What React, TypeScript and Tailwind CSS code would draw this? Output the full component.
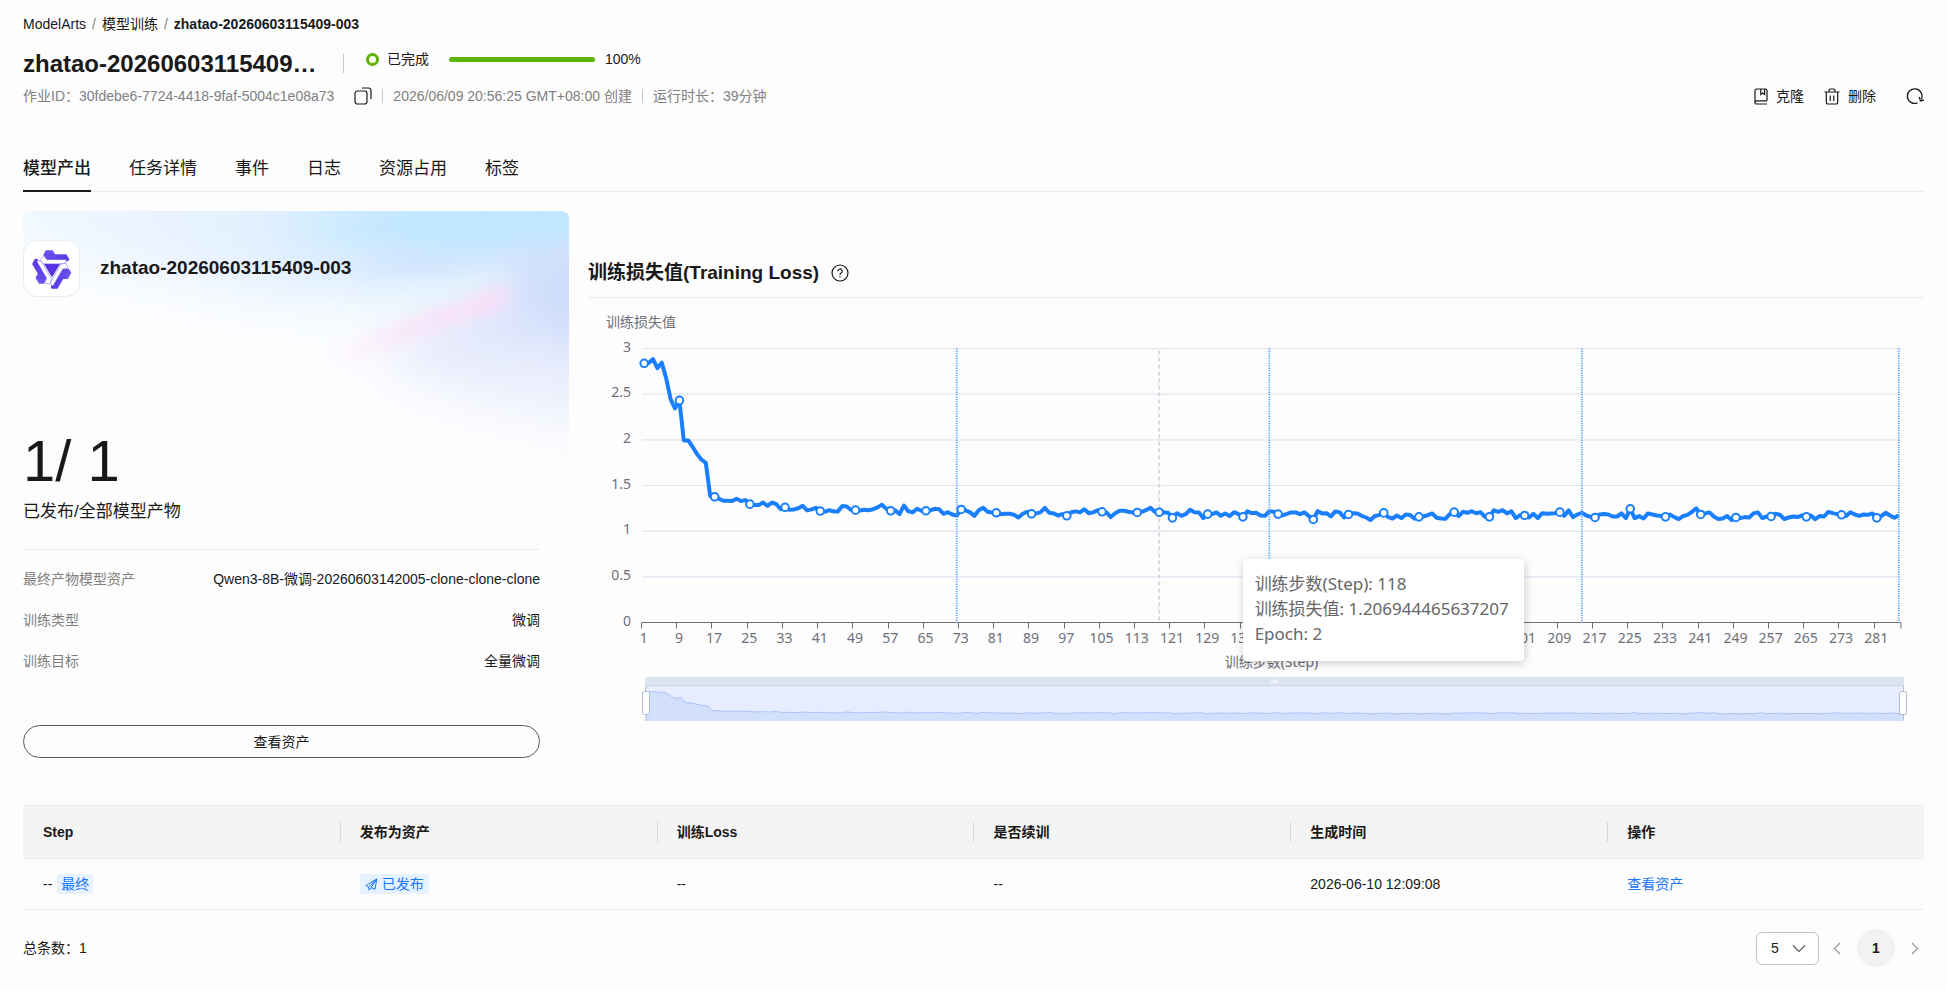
import { useState } from 'react'

// smoothed training loss, one value per step
const LOSS = [
  2.837, 2.84, 2.885, 2.785, 2.845, 2.673, 2.446, 2.344, 2.432, 1.994, 1.994, 1.924, 1.844, 1.785, 1.749, 1.384, 1.376,
  1.354, 1.333, 1.333, 1.329, 1.354, 1.329, 1.34, 1.296, 1.285, 1.285, 1.314, 1.278, 1.314, 1.296, 1.24, 1.26, 1.234,
  1.238, 1.252, 1.278, 1.227, 1.238, 1.256, 1.22, 1.212, 1.23, 1.216, 1.216, 1.274, 1.27, 1.234, 1.23, 1.227, 1.234,
  1.23, 1.241, 1.26, 1.289, 1.245, 1.223, 1.23, 1.187, 1.28, 1.219, 1.205, 1.245, 1.223, 1.223, 1.227, 1.245, 1.241,
  1.19, 1.208, 1.183, 1.172, 1.238, 1.23, 1.205, 1.168, 1.23, 1.256, 1.212, 1.205, 1.201, 1.186, 1.19, 1.19, 1.179,
  1.15, 1.19, 1.212, 1.19, 1.194, 1.205, 1.256, 1.201, 1.194, 1.172, 1.187, 1.168, 1.208, 1.216, 1.205, 1.241, 1.197,
  1.205, 1.23, 1.212, 1.205, 1.154, 1.197, 1.223, 1.223, 1.212, 1.205, 1.205, 1.212, 1.23, 1.256, 1.212, 1.207, 1.205,
  1.201, 1.146, 1.197, 1.168, 1.187, 1.234, 1.208, 1.205, 1.143, 1.187, 1.187, 1.205, 1.168, 1.194, 1.165, 1.208, 1.187,
  1.157, 1.216, 1.197, 1.201, 1.172, 1.168, 1.219, 1.212, 1.187, 1.172, 1.19, 1.205, 1.205, 1.187, 1.205, 1.165, 1.128,
  1.219, 1.194, 1.197, 1.161, 1.216, 1.205, 1.15, 1.183, 1.197, 1.194, 1.168, 1.15, 1.121, 1.165, 1.179, 1.2, 1.154,
  1.139, 1.172, 1.143, 1.183, 1.176, 1.135, 1.157, 1.161, 1.176, 1.194, 1.146, 1.139, 1.135, 1.187, 1.208, 1.165, 1.212,
  1.201, 1.219, 1.197, 1.208, 1.157, 1.157, 1.227, 1.212, 1.23, 1.194, 1.216, 1.143, 1.176, 1.172, 1.15, 1.19, 1.143,
  1.197, 1.19, 1.194, 1.197, 1.208, 1.168, 1.227, 1.154, 1.183, 1.201, 1.172, 1.157, 1.15, 1.183, 1.187, 1.183, 1.161,
  1.161, 1.194, 1.143, 1.245, 1.143, 1.165, 1.139, 1.194, 1.183, 1.172, 1.165, 1.157, 1.183, 1.154, 1.132, 1.165, 1.179,
  1.212, 1.249, 1.183, 1.194, 1.205, 1.161, 1.132, 1.139, 1.165, 1.121, 1.15, 1.143, 1.154, 1.15, 1.194, 1.205, 1.143,
  1.161, 1.161, 1.19, 1.179, 1.132, 1.15, 1.161, 1.154, 1.172, 1.157, 1.172, 1.132, 1.165, 1.161, 1.212, 1.198, 1.187,
  1.179, 1.165, 1.208, 1.183, 1.168, 1.183, 1.179, 1.194, 1.146, 1.165, 1.201, 1.172, 1.146, 1.172,
]

const TABS = ['模型产出', '任务详情', '事件', '日志', '资源占用', '标签']

const DETAILS = [
  { label: '最终产物模型资产', value: 'Qwen3-8B-微调-20260603142005-clone-clone-clone' },
  { label: '训练类型', value: '微调' },
  { label: '训练目标', value: '全量微调' },
]

const COLUMNS = ['Step', '发布为资产', '训练Loss', '是否续训', '生成时间', '操作']

function CopyIcon() {
  return (
    <svg width="18" height="18" viewBox="0 0 18 18" fill="none" stroke="#191919" strokeWidth="1.2">
      <rect x="1" y="4" width="12" height="13" rx="2.5" />
      <path d="M8 1h6.500A2.500 2.500 0 0 1 17 3.500V12" />
    </svg>
  )
}

function CloneIcon() {
  return (
    <svg width="14" height="17" viewBox="0 0 14 17" fill="none" stroke="#191919" strokeWidth="1.2">
      <path d="M13 12.800V2.600A1.600 1.600 0 0 0 11.400 1H2.600A1.600 1.600 0 0 0 1 2.600v11.800A1.600 1.600 0 0 0 2.600 16H13" />
      <path d="M1 14.200a1.600 1.600 0 0 1 1.600-1.400H13" />
      <path d="M6.800 1v5.400l1.900-1.500 1.900 1.500V1" />
    </svg>
  )
}

function TrashIcon() {
  return (
    <svg width="16" height="17" viewBox="0 0 16 17" fill="none" stroke="#191919" strokeWidth="1.2">
      <path d="M.5 4h15M5 4V2.400A1.400 1.400 0 0 1 6.400 1h3.200A1.400 1.400 0 0 1 11 2.400V4" />
      <path d="M2.300 4v10.400A1.600 1.600 0 0 0 3.900 16h8.200a1.600 1.600 0 0 0 1.600-1.600V4" />
      <path d="M6.200 7.500v5.500M9.800 7.500v5.500" />
    </svg>
  )
}

function RefreshIcon() {
  return (
    <svg width="18" height="17" viewBox="0 0 18 17" fill="none" stroke="#191919" strokeWidth="1.3">
      <path d="M11.400 14.900A7.300 7.300 0 1 1 15.300 11.200" />
      <path d="M13.200 9l1.300 3.900 3.300-.9" />
    </svg>
  )
}

function HelpIcon() {
  return (
    <svg width="18" height="18" viewBox="0 0 18 18" fill="none" stroke="#191919" strokeWidth="1.2">
      <circle cx="9" cy="9" r="8" />
      <path d="M6.800 7.200a2.200 2.200 0 1 1 3.300 1.900c-.7.4-1.100.8-1.100 1.600v.3" />
      <path d="M9 12.300v1.300" />
    </svg>
  )
}

function SendIcon() {
  return (
    <svg width="13" height="13" viewBox="0 0 13 13" fill="none" stroke="#1476ff" strokeLinejoin="round">
      <path d="M11.800 1L.9 7.600l2.700 1.600L11.800 1zM11.800 1L10 11.200 6 9.600 11.800 1z" />
      <path d="M3.600 9.200l.6 3L6 9.700" />
    </svg>
  )
}

function QwenLogo() {
  return (
    <svg width="40" height="40" viewBox="-60 -60 120 120">
      <defs>
        <linearGradient id="arm" x1="0" y1="0" x2="1" y2="1">
          <stop offset="0" stopColor="#6a5cf0" />
          <stop offset="1" stopColor="#5a2fe0" />
        </linearGradient>
      </defs>
      <path d="M-24-15h48L0 25z" fill="#5a32e0" />
      {[0, 120, 240].map((deg) => (
        <g key={deg} transform={`rotate(${deg})`} strokeLinejoin="round">
          <path d="M-19-56h21l7 12h34l9 15-4 6h-60l-14-20z" fill="url(#arm)" />
          <path d="M-26-40l9 12h61l-6 12h-64l-10-12z" fill="#fff" stroke="#7a68ee" strokeWidth="1.500" />
        </g>
      ))}
    </svg>
  )
}

function CardBackdrop() {
  return (
    <svg className="absolute inset-0 h-[275px] w-full rounded-t-lg" viewBox="0 0 546 275" preserveAspectRatio="none" aria-hidden="true">
      <defs>
        <filter id="soft" x="-50%" y="-50%" width="200%" height="200%">
          <feGaussianBlur stdDeviation="26" />
        </filter>
        <filter id="streak" x="-50%" y="-50%" width="200%" height="200%">
          <feGaussianBlur stdDeviation="12" />
        </filter>
        <filter id="ray" x="-50%" y="-50%" width="200%" height="200%">
          <feGaussianBlur stdDeviation="8" />
        </filter>
        <linearGradient id="top" x1="0" y1="0" x2="1" y2="0">
          <stop offset="0" stopColor="#f3f9ff" />
          <stop offset="0.4" stopColor="#e4f1ff" />
          <stop offset="0.7" stopColor="#cde6ff" />
          <stop offset="1" stopColor="#c8deff" />
        </linearGradient>
        <linearGradient id="sky" x1="0" y1="0" x2="1" y2="0">
          <stop offset="0" stopColor="#c4ebff" stopOpacity="0" />
          <stop offset="0.45" stopColor="#bfe7ff" />
          <stop offset="1" stopColor="#bdeaff" />
        </linearGradient>
        <linearGradient id="mint" x1="0" y1="1" x2="1" y2="0">
          <stop offset="0" stopColor="#f6fcfd" stopOpacity="0" />
          <stop offset="1" stopColor="#e2f6fb" />
        </linearGradient>
        <linearGradient id="pink" x1="0" y1="0" x2="1" y2="0">
          <stop offset="0" stopColor="#fdf1fb" stopOpacity="0" />
          <stop offset="0.5" stopColor="#fbe2f7" />
          <stop offset="1" stopColor="#f8dcf7" />
        </linearGradient>
        <linearGradient id="fade" x1="0" y1="0" x2="0" y2="1">
          <stop offset="0" stopColor="#fdfdfe" stopOpacity="0" />
          <stop offset="1" stopColor="#fdfdfe" />
        </linearGradient>
      </defs>
      <rect width="546" height="275" fill="#fcfdff" />
      <path d="M-60-60h700V70L420 84 240 84 80 56-60 16z" fill="url(#top)" filter="url(#soft)" />
      <path d="M640 0L510 50 400 110 350 150 460 200 640 260z" fill="#e2e8fc" filter="url(#soft)" />
      <path d="M620 20L500 44 480 100 560 130 620 130z" fill="#cbdcfb" filter="url(#soft)" />
      <path d="M240-4L560-4V24L440 34 260 34z" fill="url(#sky)" filter="url(#streak)" />
      <path d="M350 46L450 42 420 58 340 60z" fill="#cfe2fd" filter="url(#streak)" />
      <path d="M260 110L480 62 476 80 300 130z" fill="url(#mint)" filter="url(#streak)" />
      <path d="M280 150L486 72 482 96 400 122 320 156z" fill="url(#pink)" filter="url(#ray)" />
      <rect y="120" width="546" height="155" fill="url(#fade)" />
    </svg>
  )
}

const PLOT = { left: 54, right: 1313, top: 50.5, bottom: 324.5 }
const STEP_WIDTH = (PLOT.right - PLOT.left) / LOSS.length
const EPOCH_ENDS = [72, 143, 214, 286]
const HOVERED = 118

const xOf = (step: number) => PLOT.left + (step - 0.5) * STEP_WIDTH
const yOf = (loss: number) => PLOT.bottom - (loss / 3) * (PLOT.bottom - PLOT.top)

const linePoints = LOSS.map((v, i) => `${xOf(i + 1).toFixed(1)},${yOf(v).toFixed(1)}`).join(' ')
const shadowPoints = LOSS.map((v, i) => `${(58 + i * 4.414).toFixed(1)},${(415 - (v - 1.2) * 12.8).toFixed(1)}`).join(' ')
const labelled = LOSS.map((_, i) => i + 1).filter((s) => s % 8 === 1)

function LossChart() {
  return (
    <div className="relative">
      <svg className="block h-auto w-full font-['Noto_Sans','Noto_Sans_CJK_SC',sans-serif] text-[14px]" viewBox="0 0 1336 428" role="img" aria-label="训练损失值">
        <text x="18" y="29" fill="#6e7079">训练损失值</text>

        {[0, 0.5, 1, 1.5, 2, 2.5, 3].map((v) => (
          <g key={v}>
            {v > 0 && <path d={`M${PLOT.left} ${yOf(v)}H${PLOT.right}`} stroke="#e0e6f1" strokeWidth="1.200" />}
            <text x="43" y={yOf(v) + 3} textAnchor="end" fill="#6e7079">{v}</text>
          </g>
        ))}

        <path d={`M${PLOT.left} ${PLOT.bottom}H${PLOT.right}v6`} fill="none" stroke="#6e7079" />
        {labelled.map((s) => (
          <g key={s}>
            <path d={`M${Math.round(xOf(s) - STEP_WIDTH / 2) - 0.5} ${PLOT.bottom}v6`} stroke="#6e7079" />
            <text x={xOf(s) - 0.5} y="345" textAnchor="middle" fill="#6e7079">{s}</text>
          </g>
        ))}
        <text x={(PLOT.left + PLOT.right) / 2} y="369" textAnchor="middle" fill="#6e7079">训练步数(Step)</text>

        <path d={`M${xOf(HOVERED)} ${PLOT.top + 2}V${PLOT.bottom}`} stroke="#d2d5de" strokeWidth="1.800" strokeDasharray="4 3" />
        <polyline points={linePoints} fill="none" stroke="#1a7fff" strokeWidth="4" strokeLinejoin="round" />
        {EPOCH_ENDS.map((s) => (
          <path key={s} d={`M${xOf(s)} ${PLOT.top}V${PLOT.bottom}`} stroke="#5fa3ff" strokeWidth="1.800" strokeDasharray="1.200 1.200" />
        ))}
        {[...labelled, HOVERED].map((s) => (
          <circle key={s} cx={xOf(s)} cy={yOf(LOSS[s - 1])} r="3.800" fill="#fff" stroke="#1a7fff" strokeWidth="2" />
        ))}

        {/* data zoom */}
        <rect x="57" y="379" width="1259" height="9" rx="1" fill="#dde3f1" />
        <rect x="57" y="388" width="1259" height="35" fill="#e7edfe" />
        <path d="M57 387.500H1316M57 422.500H1316" stroke="#ccd7e9" />
        <polygon points={`58,423 ${shadowPoints} 1316,423`} fill="#d2e0fc" />
        <polyline points={shadowPoints} fill="none" stroke="#adc3f7" />
        <path d="M684 381.500v4M686.500 381.500v4M689 381.500v4" stroke="#fff" />
        <path d="M58 387V423M1315.500 387V423" stroke="#b5c3de" />
        <rect x="54.500" y="393.500" width="7" height="23" rx="2" fill="#fff" stroke="#acb8d1" />
        <rect x="1311.500" y="393.500" width="7" height="23" rx="2" fill="#fff" stroke="#acb8d1" />
      </svg>
      <div className="absolute left-[49%] top-[61%] h-[102px] w-[281px] rounded bg-white p-3 font-['Noto_Sans','Noto_Sans_CJK_SC',sans-serif] text-[17px] leading-[25px] whitespace-nowrap text-[#666] shadow-[1px_2px_10px_rgba(0,0,0,0.2)]">
        <p>训练步数(Step): 118</p>
        <p>训练损失值: 1.206944465637207</p>
        <p>Epoch: 2</p>
      </div>
    </div>
  )
}

export default function App() {
  const [tab, setTab] = useState(TABS[0])
  const [pageSize, setPageSize] = useState('5')

  return (
    <main className="min-h-screen bg-[#fdfdfd] px-[23px] pt-[14px] font-['Liberation_Sans','Noto_Sans_CJK_SC',sans-serif] text-[14px] leading-5 text-[#191919]">
      <nav className="flex gap-1.5">
        <a href="#modelarts">ModelArts</a>
        <span className="text-[#808080]">/</span>
        <a href="#training">模型训练</a>
        <span className="text-[#808080]">/</span>
        <span className="font-bold">zhatao-20260603115409-003</span>
      </nav>

      <header className="mt-[14px] flex items-end justify-between">
        <div>
          <div className="flex h-8 items-start">
            <h1 className="w-[294px] truncate text-[24px] leading-8 font-bold">zhatao-20260603115409-003</h1>
            <span className="mt-1.5 ml-[26px] h-[19px] w-px bg-[#c9c9c9]" />
            <div className="ml-[22px] flex h-[22px] items-center">
              <span className="size-[13px] rounded-full border-[3px] border-[#5cb300]" />
              <span className="ml-2">已完成</span>
              <span className="ml-5 h-[5px] w-[146px] rounded-full bg-[#5cb300]" />
              <span className="ml-[10px]">100%</span>
            </div>
          </div>
          <div className="mt-1.5 flex items-center text-[#808080]">
            <span>作业ID：30fdebe6-7724-4418-9faf-5004c1e08a73</span>
            <button className="ml-5" aria-label="复制"><CopyIcon /></button>
            <span className="mx-[10px] h-[14px] w-px bg-[#c9c9c9]" />
            <span>2026/06/09 20:56:25 GMT+08:00 创建</span>
            <span className="mx-[10px] h-[14px] w-px bg-[#c9c9c9]" />
            <span>运行时长：39分钟</span>
          </div>
        </div>
        <div className="flex items-center">
          <button className="flex items-center gap-2"><CloneIcon />克隆</button>
          <button className="ml-5 flex items-center gap-2"><TrashIcon />删除</button>
          <button className="ml-[30px]" aria-label="刷新"><RefreshIcon /></button>
        </div>
      </header>

      <div role="tablist" className="mt-[51px] flex gap-[38px] border-b border-[#ebebeb]">
        {TABS.map((name) => (
          <button
            key={name}
            role="tab"
            aria-selected={tab === name}
            onClick={() => setTab(name)}
            className={`-mb-px border-b-2 pb-[9px] text-[17px] leading-6 ${
              tab === name ? 'border-[#191919] font-medium' : 'border-transparent'
            }`}
          >
            {name}
          </button>
        ))}
      </div>

      <div className="mt-[19px] flex gap-[19px]">
        <section className="relative w-[546px] shrink-0 pr-[29px]">
          <CardBackdrop />
          <div className="relative">
            <div className="flex items-center gap-5 pt-[29px]">
              <div className="flex size-[57px] items-center justify-center rounded-[14px] border border-[#ececf0] bg-white">
                <QwenLogo />
              </div>
              <h2 className="pb-0.5 text-[19px] leading-6 font-bold">zhatao-20260603115409-003</h2>
            </div>
            <p className="mt-[132px] text-[58px] leading-16">1/ 1</p>
            <p className="mt-[7px] text-[17px] leading-6">已发布/全部模型产物</p>
            <dl className="mt-[25px] flex flex-col gap-5 border-t border-[#ebebeb] pt-[19px]">
              {DETAILS.map((d) => (
                <div key={d.label} className="flex justify-between leading-[21px]">
                  <dt className="text-[#808080]">{d.label}</dt>
                  <dd>{d.value}</dd>
                </div>
              ))}
            </dl>
            <button className="mt-[53px] h-[33px] w-full rounded-full border border-[#595959]">查看资产</button>
          </div>
        </section>

        <section className="min-w-0 flex-1 pt-12">
          <div className="flex items-center gap-3 border-b border-[#ebebeb] pb-[10px]">
            <h2 className="text-[19px] leading-7 font-bold">训练损失值(Training Loss)</h2>
            <HelpIcon />
          </div>
          <LossChart />
        </section>
      </div>

      <table className="mt-[47px] w-full table-fixed border-collapse text-left">
        <thead>
          <tr className="h-[53px] border-y border-[#ebebeb] bg-[#f4f4f4]">
            {COLUMNS.map((c, i) => (
              <th key={c} className="p-0 font-bold">
                <span className={`block border-l pl-[19px] ${i ? 'border-[#d9d9d9]' : 'border-transparent'}`}>{c}</span>
              </th>
            ))}
          </tr>
        </thead>
        <tbody>
          <tr className="h-[51px] border-b border-[#ebebeb]">
            <td className="pl-5">
              <span className="flex items-center gap-[5px]">
                -- <span className="rounded-xs bg-[#e6f2ff] px-1 text-[#1476ff]">最终</span>
              </span>
            </td>
            <td className="pl-5">
              <span className="flex w-fit items-center gap-1 rounded-xs bg-[#e6f2ff] px-[5px] text-[#1476ff]">
                <SendIcon />已发布
              </span>
            </td>
            <td className="pl-5">--</td>
            <td className="pl-5">--</td>
            <td className="pl-5">2026-06-10 12:09:08</td>
            <td className="pl-5"><a href="#asset" className="text-[#1476ff]">查看资产</a></td>
          </tr>
        </tbody>
      </table>

      <footer className="mt-[19px] flex h-[38px] items-center justify-between">
        <span>总条数：1</span>
        <div className="flex items-center">
          <div className="relative">
            <select
              aria-label="每页条数"
              value={pageSize}
              onChange={(e) => setPageSize(e.target.value)}
              className="h-[33px] w-[63px] appearance-none rounded-md border border-[#c3c3c3] bg-white pl-[14px] text-[14px]"
            >
              <option>5</option>
              <option>10</option>
              <option>20</option>
            </select>
            <svg className="pointer-events-none absolute top-3 right-[13px]" width="14" height="9" viewBox="0 0 14 9" fill="none" stroke="#595959" strokeWidth="1.200">
              <path d="M1 1.500l6 6 6-6" />
            </svg>
          </div>
          <button className="ml-[14px]" aria-label="上一页">
            <svg width="8" height="13" viewBox="0 0 8 13" fill="none" stroke="#999" strokeWidth="1.300">
              <path d="M7 1L1.500 6.500 7 12" />
            </svg>
          </button>
          <button className="mx-4 size-[38px] rounded-full bg-[#f2f2f2] font-bold">1</button>
          <button className="mr-[5px]" aria-label="下一页">
            <svg width="8" height="13" viewBox="0 0 8 13" fill="none" stroke="#999" strokeWidth="1.300">
              <path d="M1 1l5.500 5.500L1 12" />
            </svg>
          </button>
        </div>
      </footer>
    </main>
  )
}
